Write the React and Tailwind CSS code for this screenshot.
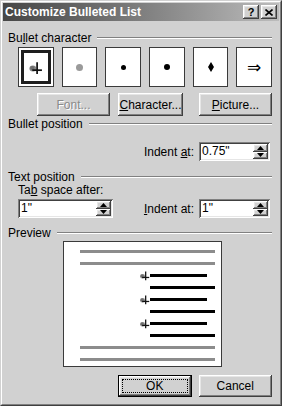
import React from "react";

const raised =
  "shadow-[inset_-1px_-1px_#404040,inset_1px_1px_#ffffff,inset_-2px_-2px_#808080,inset_2px_2px_#e6e6e6]";
const sunken =
  "shadow-[inset_1px_1px_#808080,inset_-1px_-1px_#ffffff,inset_2px_2px_#404040,inset_-2px_-2px_#e6e6e6]";

// picture bullet: grey blob with a black cross
const PicBullet = ({ size = 14 }) => (
  <svg width={size} height={size} viewBox="0 0 14 14">
    <ellipse cx="4.5" cy="8" rx="3.2" ry="2.8" fill="#8a8a8a" />
    <ellipse cx="4" cy="7.5" rx="2" ry="1.8" fill="#6e6e6e" />
    <line x1="8.5" y1="2" x2="8.5" y2="13" stroke="#111" strokeWidth="1.6" />
    <line x1="4" y1="9.5" x2="13" y2="9.5" stroke="#111" strokeWidth="1.6" />
  </svg>
);

const Group = ({ label, className = "" }) => (
  <div className={"flex items-center h-[14px] " + className}>
    <span className="pr-[6px] whitespace-nowrap">{label}</span>
    <div className="flex-1 h-[2px] border-t border-t-[#808080] border-b border-b-white" />
  </div>
);

const Button = ({ children, className = "", disabled }) => (
  <div
    className={`flex items-center justify-center h-[23px] bg-[#d1d1d1] ${raised} ${
      disabled ? "text-[#8a8a8a] [text-shadow:1px_1px_0_#ffffff]" : ""
    } ${className}`}
  >
    {children}
  </div>
);

const Arrow = ({ down }) => (
  <svg width="7" height="4" viewBox="0 0 7 4">
    <polygon points={down ? "0,0 7,0 3.5,4" : "3.5,0 7,4 0,4"} fill="#000" />
  </svg>
);

const Spin = ({ value, className = "" }) => (
  <div className={`flex shrink-0 h-[19px] bg-white ${sunken} p-[2px] ${className}`}>
    <span className="flex-1 pl-[1px] leading-[15px]">{value}</span>
    <div className="flex flex-col w-[15px]">
      <div className={`flex-1 flex items-center justify-center bg-[#d1d1d1] ${raised}`}>
        <Arrow />
      </div>
      <div className={`flex-1 flex items-center justify-center bg-[#d1d1d1] ${raised}`}>
        <Arrow down />
      </div>
    </div>
  </div>
);

const Box = ({ children, selected }) => (
  <div className="w-[36px] h-[40px] bg-white border border-[#3a3a3a] p-[2px]">
    <div
      className={`h-full flex items-center justify-center ${
        selected ? "border-[3px] border-[#1e1e1e]" : ""
      }`}
    >
      {children}
    </div>
  </div>
);

const PreviewLine = ({ kind }) => {
  if (kind === "gray")
    return <div className="ml-[16px] w-[135px] h-[3px] bg-[#8c8c8c]" />;
  if (kind === "short")
    return (
      <div className="flex items-center h-[3px] ml-[75px]">
        <div className="w-[11px] flex items-center">
          <PicBullet size={11} />
        </div>
        <div className="w-[57px] h-[3px] bg-black" />
      </div>
    );
  return <div className="ml-[86px] w-[65px] h-[3px] bg-black" />;
};

export default function App() {
  const rows = ["gray", "gray", "short", "long", "short", "long", "short", "long", "gray", "gray"];
  return (
    <div
      className="w-[282px] h-[406px] overflow-hidden bg-[#d1d1d1] text-black text-[12px] leading-[14px] border border-t-[#d1d1d1] border-l-[#d1d1d1] border-r-[#404040] border-b-[#404040]"
      style={{ fontFamily: '"Liberation Sans", Arial, sans-serif' }}
    >
      <div className="h-full border border-t-white border-l-white border-r-[#808080] border-b-[#808080] p-[1px] flex flex-col">
        {/* title bar */}
        <div className="h-[18px] shrink-0 flex items-center pl-[2px] pr-[2px] bg-linear-to-r from-[#464646] to-[#bcbcbc]">
          <span className="flex-1 text-white font-bold text-[12px]">Customize Bulleted List</span>
          <div className="flex gap-[2px]">
            <div className={`w-[16px] h-[14px] flex items-center justify-center bg-[#d1d1d1] ${raised} font-bold text-[11px]`}>
              ?
            </div>
            <div className={`w-[16px] h-[14px] flex items-center justify-center bg-[#d1d1d1] ${raised}`}>
              <svg width="8" height="7" viewBox="0 0 8 7">
                <path d="M0.5 0.5 L7.5 6.5 M7.5 0.5 L0.5 6.5" stroke="#000" strokeWidth="1.6" />
              </svg>
            </div>
          </div>
        </div>

        <div className="pl-[5px] pr-[7px] flex flex-col">
          <Group
            className="mt-[10px]"
            label={
              <>
                Bu<u>l</u>let character
              </>
            }
          />

          <div className="flex gap-[8px] ml-[10px] mt-[2px]">
            <Box selected>
              <PicBullet size={15} />
            </Box>
            <Box>
              <div className="w-[7px] h-[7px] rounded-full bg-[#9a9a9a]" />
            </Box>
            <Box>
              <div className="w-[5px] h-[5px] rounded-full bg-black" />
            </Box>
            <Box>
              <div className="w-[6px] h-[6px] rounded-full bg-black" />
            </Box>
            <Box>
              <svg width="6" height="10" viewBox="0 0 6 10">
                <polygon points="3,0 6,5 3,10 0,5" fill="#000" />
              </svg>
            </Box>
            <Box>
              <span className="text-[17px] leading-none" style={{ fontFamily: '"DejaVu Sans", sans-serif' }}>
                ⇒
              </span>
            </Box>
          </div>

          <div className="flex mt-[6px]">
            <Button disabled className="ml-[29px] w-[73px]">
              Font...
            </Button>
            <Button className="ml-[8px] w-[65px]">
              <u>C</u>haracter...
            </Button>
            <Button className="ml-[16px] w-[73px]">
              <u>P</u>icture...
            </Button>
          </div>

          <Group className="mt-[1px]" label="Bullet position" />

          <div className="flex items-center justify-end mt-[11px] pr-[2px]">
            <span className="mr-[5px] whitespace-nowrap">
              Indent <u>a</u>t:
            </span>
            <Spin value={'0.75"'} className="w-[71px]" />
          </div>

          <Group className="mt-[9px]" label="Text position" />

          <div className="ml-[10px] h-[13px] leading-[13px] whitespace-nowrap">
            Ta<u>b</u> space after:
          </div>

          <div className="flex items-center mt-[2px] pr-[2px]">
            <Spin value={'1"'} className="ml-[10px] w-[95px]" />
            <span className="ml-auto mr-[5px] whitespace-nowrap">
              <u>I</u>ndent at:
            </span>
            <Spin value={'1"'} className="w-[71px]" />
          </div>

          <Group className="mt-[8px]" label="Preview" />

          <div className="ml-[55px] mt-[1px] w-[159px] h-[126px] bg-white border border-[#3a3a3a] pt-[8px] flex flex-col gap-[9px]">
            {rows.map((r, i) => (
              <PreviewLine key={i} kind={r} />
            ))}
          </div>

          <div className="flex mt-[8px]">
            <div className="ml-[110px] w-[74px] h-[22px] border border-black">
              <div className={`h-full bg-[#d1d1d1] ${raised} p-[3px]`}>
                <div className="h-full border border-dotted border-black flex items-center justify-center">
                  OK
                </div>
              </div>
            </div>
            <Button className="ml-[7px] w-[74px] !h-[22px]">Cancel</Button>
          </div>
        </div>
      </div>
    </div>
  );
}
